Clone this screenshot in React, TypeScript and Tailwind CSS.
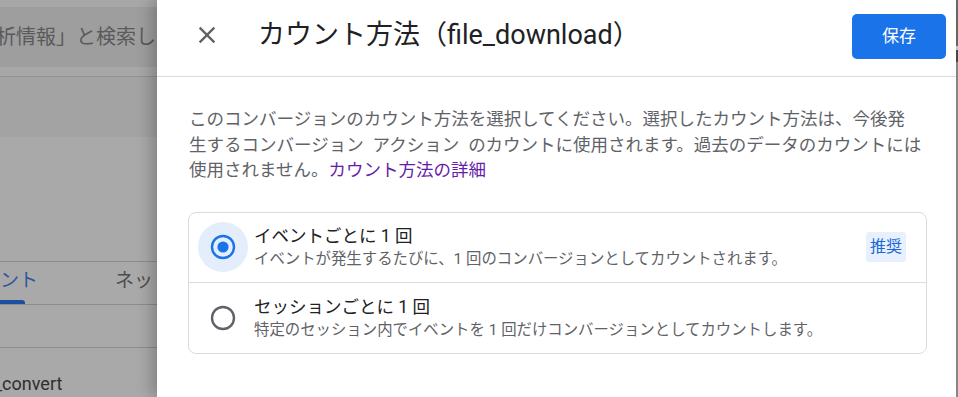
import { useState } from "react";

const options = [
  {
    id: "event",
    title: "イベントごとに 1 回",
    detail: "イベントが発生するたびに、1 回のコンバージョンとしてカウントされます。",
    recommended: true,
  },
  {
    id: "session",
    title: "セッションごとに 1 回",
    detail: "特定のセッション内でイベントを 1 回だけコンバージョンとしてカウントします。",
    recommended: false,
  },
] as const;

function CloseIcon() {
  return (
    <svg width="28" height="28" viewBox="0 0 24 24" fill="#5f6368">
      <path d="M19 6.41 17.59 5 12 10.59 6.41 5 5 6.41 10.59 12 5 17.59 6.41 19 12 13.41 17.59 19 19 17.59 13.41 12z" />
    </svg>
  );
}

function Radio({ checked }: { checked: boolean }) {
  return (
    <span
      className={
        checked
          ? "flex h-[50px] w-[50px] shrink-0 items-center justify-center rounded-full bg-[#e3edfc]"
          : "flex h-[50px] w-[50px] shrink-0 items-center justify-center rounded-full"
      }
    >
      <svg width="26" height="26" viewBox="0 0 26 26">
        <circle
          cx="13"
          cy="13"
          r="11"
          fill="none"
          stroke={checked ? "#1a73e8" : "#5f6368"}
          strokeWidth="2.4"
        />
        {checked && <circle cx="13" cy="13" r="5.6" fill="#1a73e8" />}
      </svg>
    </span>
  );
}

// dimmed page behind the side sheet
function Backdrop() {
  return (
    <div className="flex w-[157px] shrink-0 flex-col overflow-hidden bg-[#a9a9a9] text-[19px]">
      <div className="h-[7px] bg-[#a7a7a7]" />
      <div className="flex h-[60px] items-center whitespace-nowrap bg-[#9e9e9e] text-[20px] text-[#5a5a5a]">
        <span className="ml-[-4px] shrink-0">析情報」と検索し</span>
      </div>
      <div className="h-[9px] bg-[#a7a7a7]" />
      <div className="h-px bg-[#919191]" />
      <div className="h-[60px] bg-[#a3a3a3]" />
      <div className="h-[124px]" />
      <div className="h-px bg-[#8c8c8c]" />
      <div className="flex h-[42px] flex-col">
        <div className="flex h-[38px] items-center whitespace-nowrap">
          <span className="w-[115px] shrink-0 text-[#2f5799]">ント</span>
          <span className="shrink-0 text-[#4d4d4d]">ネット</span>
        </div>
        <div className="h-[4px] w-[25px] rounded-tr-[3px] bg-[#1a509f]" />
      </div>
      <div className="h-px bg-[#8c8c8c]" />
      <div className="h-[42px]" />
      <div className="h-px bg-[#8c8c8c]" />
      <div className="flex h-[49px] items-center whitespace-nowrap pt-[22px] text-[18px] text-[#2e2e2e]">
        <span className="ml-[-6px] shrink-0">_convert</span>
      </div>
    </div>
  );
}

export default function App() {
  const [selected, setSelected] = useState<string>("event");

  return (
    <div className="flex h-[397px] w-[958px] overflow-hidden bg-white font-['Roboto','Noto_Sans_CJK_JP',sans-serif]">
      <Backdrop />

      <section className="relative z-10 flex w-[799px] shrink-0 flex-col bg-white shadow-[-6px_0_14px_rgba(0,0,0,0.22)]">
        <header className="flex h-[77px] shrink-0 items-center border-b border-[#dadce0] pb-[6px] pl-[36px] pr-[10px]">
          <button className="flex h-[28px] w-[28px] items-center justify-center">
            <CloseIcon />
          </button>
          <h1 className="ml-[37px] text-[27px] leading-[34px] text-[#202124]">
            カウント方法（file_download）
          </h1>
          <button className="ml-auto mt-[3px] h-[45px] w-[94px] rounded-[5px] bg-[#1a73e8] text-[17px] text-white">
            保存
          </button>
        </header>

        <div className="pl-[31px] pr-[29px] pt-[30px]">
          <p className="whitespace-nowrap pl-px text-[17.5px] leading-[25.5px] text-[#5f6368]">
            このコンバージョンのカウント方法を選択してください。選択したカウント方法は、今後発
            <br />
            生するコンバージョン{"\u2002"}アクション{"\u2002"}のカウントに使用されます。過去のデータのカウントには
            <br />
            使用されません。
            <a href="#" className="text-[#681da8]">
              カウント方法の詳細
            </a>
          </p>

          <div className="mt-[28px] divide-y divide-[#dadce0] rounded-[8px] border border-[#dadce0]">
            {options.map((o) => (
              <label
                key={o.id}
                onClick={() => setSelected(o.id)}
                className="flex h-[70px] cursor-pointer items-center pl-[9px] pr-[20px]"
              >
                <Radio checked={selected === o.id} />
                <div className="ml-[6px] flex flex-col whitespace-nowrap">
                  <span className="text-[17.5px] leading-[24px] text-[#202124]">{o.title}</span>
                  <span className="text-[15.4px] leading-[22px] text-[#5f6368]">{o.detail}</span>
                </div>
                {o.recommended && (
                  <span className="ml-auto flex h-[30px] w-[40px] items-center justify-center rounded-[3px] bg-[#e8f0fe] text-[16px] text-[#1967d2]">
                    推奨
                  </span>
                )}
              </label>
            ))}
          </div>
        </div>
      </section>

      <div className="flex w-[2px] shrink-0 flex-col bg-[#8a8a8a]">
        <div className="h-[46px] bg-[#6a6a6a]" />
        <div className="h-[4px] bg-[#c8c8c8]" />
        <div className="h-[12px] bg-[#4a4a4a]" />
      </div>
    </div>
  );
}
